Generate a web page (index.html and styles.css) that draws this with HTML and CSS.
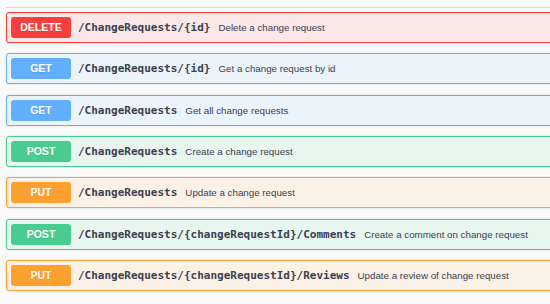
FILE: index.html
```html
<!DOCTYPE html>
<html lang="en">
<head>
    <meta charset="UTF-8">
    <meta name="viewport" content="width=device-width, initial-scale=1.0">
    <title>ChangeRequests</title>
    <link rel="stylesheet" href="styles.css">
</head>
<body>
    <div class="section">
        <div class="opblocks">
            <div class="opblock delete">
                <span class="method">DELETE</span>
                <span class="path">/ChangeRequests/{id}</span>
                <span class="desc">Delete a change request</span>
            </div>
            <div class="opblock get">
                <span class="method">GET</span>
                <span class="path">/ChangeRequests/{id}</span>
                <span class="desc">Get a change request by id</span>
            </div>
            <div class="opblock get">
                <span class="method">GET</span>
                <span class="path">/ChangeRequests</span>
                <span class="desc">Get all change requests</span>
            </div>
            <div class="opblock post">
                <span class="method">POST</span>
                <span class="path">/ChangeRequests</span>
                <span class="desc">Create a change request</span>
            </div>
            <div class="opblock put">
                <span class="method">PUT</span>
                <span class="path">/ChangeRequests</span>
                <span class="desc">Update a change request</span>
            </div>
            <div class="opblock post">
                <span class="method">POST</span>
                <span class="path">/ChangeRequests/{changeRequestId}/Comments</span>
                <span class="desc">Create a comment on change request</span>
            </div>
            <div class="opblock put">
                <span class="method">PUT</span>
                <span class="path">/ChangeRequests/{changeRequestId}/Reviews</span>
                <span class="desc">Update a review of change request</span>
            </div>
        </div>
    </div>
</body>
</html>
```

FILE: styles.css
```css
body {
    margin: 0;
    background: #fafafa;
    font-family: 'Liberation Sans', Arial, sans-serif;
    color: #3b4151;
    overflow: hidden;
}

.section {
    padding: 7px 0 0 6px;
    width: 560px;
}

.opblocks {
    border-top: 1px solid #d9d9d9; /* end of the tag header */
    padding-top: 4px;
}

.opblock {
    display: flex;
    align-items: center;
    height: 31px;
    box-sizing: border-box;
    padding: 0 4px;
    margin-bottom: 10.33px;
    border: 1px solid #000;
    border-radius: 3px;
    box-shadow: 0 0 2px rgba(0, 0, 0, 0.15);
}

.method {
    width: 60px;
    height: 21px;
    line-height: 21px;
    flex-shrink: 0;
    border-radius: 3px;
    text-align: center;
    color: #fff;
    font-weight: bold;
    font-size: 10.5px;
    text-shadow: 0 1px 0 rgba(0, 0, 0, 0.1);
}

.path {
    padding: 0 8px 0 7px;
    font-family: 'DejaVu Sans Mono', 'Liberation Mono', monospace;
    font-weight: bold;
    font-size: 11px;
    color: #3b4151;
}

.desc {
    font-size: 9.75px;
    color: #3b4151;
}

.delete { background: #fae7e7; border-color: #f93e3e; }
.delete .method { background: #f93e3e; }

.get { background: #ebf3fb; border-color: #61affe; }
.get .method { background: #61affe; }

.post { background: #e8f6f0; border-color: #49cc90; }
.post .method { background: #49cc90; }

.put { background: #fbf1e6; border-color: #fca130; }
.put .method { background: #fca130; }
```
